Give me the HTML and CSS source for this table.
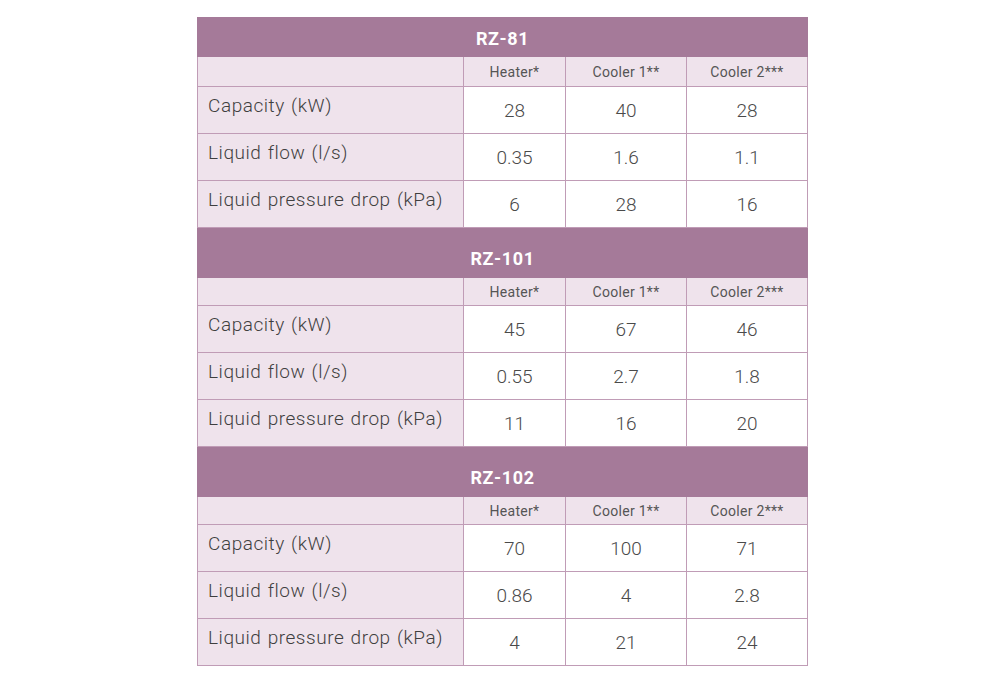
FILE: index.html
```html
<!DOCTYPE html>
<html>
<head>
<meta charset="utf-8">
<link rel="stylesheet" href="styles.css">
</head>
<body>
<table class="spec">
  <colgroup>
    <col class="c-label"><col class="c-heat"><col class="c-cool1"><col class="c-cool2">
  </colgroup>
  <tbody>
    <tr class="model first"><th colspan="4">RZ-81</th></tr>
    <tr class="sub"><td class="blank"></td><td>Heater*</td><td>Cooler 1**</td><td>Cooler 2***</td></tr>
    <tr class="data"><td class="label">Capacity (kW)</td><td>28</td><td>40</td><td>28</td></tr>
    <tr class="data"><td class="label">Liquid flow (l/s)</td><td>0.35</td><td>1.6</td><td>1.1</td></tr>
    <tr class="data last"><td class="label">Liquid pressure drop (kPa)</td><td>6</td><td>28</td><td>16</td></tr>

    <tr class="model"><th colspan="4">RZ-101</th></tr>
    <tr class="sub"><td class="blank"></td><td>Heater*</td><td>Cooler 1**</td><td>Cooler 2***</td></tr>
    <tr class="data"><td class="label">Capacity (kW)</td><td>45</td><td>67</td><td>46</td></tr>
    <tr class="data"><td class="label">Liquid flow (l/s)</td><td>0.55</td><td>2.7</td><td>1.8</td></tr>
    <tr class="data last"><td class="label">Liquid pressure drop (kPa)</td><td>11</td><td>16</td><td>20</td></tr>

    <tr class="model"><th colspan="4">RZ-102</th></tr>
    <tr class="sub"><td class="blank"></td><td>Heater*</td><td>Cooler 1**</td><td>Cooler 2***</td></tr>
    <tr class="data"><td class="label">Capacity (kW)</td><td>70</td><td>100</td><td>71</td></tr>
    <tr class="data"><td class="label">Liquid flow (l/s)</td><td>0.86</td><td>4</td><td>2.8</td></tr>
    <tr class="data last"><td class="label">Liquid pressure drop (kPa)</td><td>4</td><td>21</td><td>24</td></tr>
  </tbody>
</table>
</body>
</html>
```
FILE: styles.css
```css
html, body {
  margin: 0;
  padding: 0;
  background: #ffffff;
}

body {
  font-family: Roboto, "Liberation Sans", sans-serif;
  color: #4d4d4d;
}

.spec {
  margin: 17px 0 0 197px;
  width: 610px;
  border-collapse: collapse;
  table-layout: fixed;
}

.c-label { width: 266px; }
.c-heat { width: 102px; }
.c-cool1 { width: 121px; }
.c-cool2 { width: 121px; }

.spec td,
.spec th {
  border: 1px solid #c09cb6;
  padding: 0;
}

.model th {
  background: #a57a99;
  border-color: #a57a99;
  color: #ffffff;
  font-weight: 700;
  font-size: 18px;
  letter-spacing: 0.6px;
  text-align: center;
  vertical-align: bottom;
  height: 50px;
  padding-bottom: 8px;
  box-sizing: border-box;
}

.model.first th {
  height: 39px;
  padding-bottom: 7px;
}

.sub td {
  background: #efe3ec;
  font-size: 14px;
  color: #555555;
  text-align: center;
  height: 28px;
  box-sizing: border-box;
  letter-spacing: 0.3px;
}

.first + .sub td {
  height: 30px;
}

.data td {
  background: #ffffff;
  font-size: 19px;
  font-weight: 300;
  color: #4a4a4a;
  text-align: center;
  height: 47px;
  box-sizing: border-box;
}

.data td.label {
  background: #efe3ec;
  text-align: left;
  padding: 0 0 9px 10px;
  font-size: 19px;
  font-weight: 300;
  letter-spacing: 0.55px;
  word-spacing: 1px;
  color: #3f3f3f;
}
```
